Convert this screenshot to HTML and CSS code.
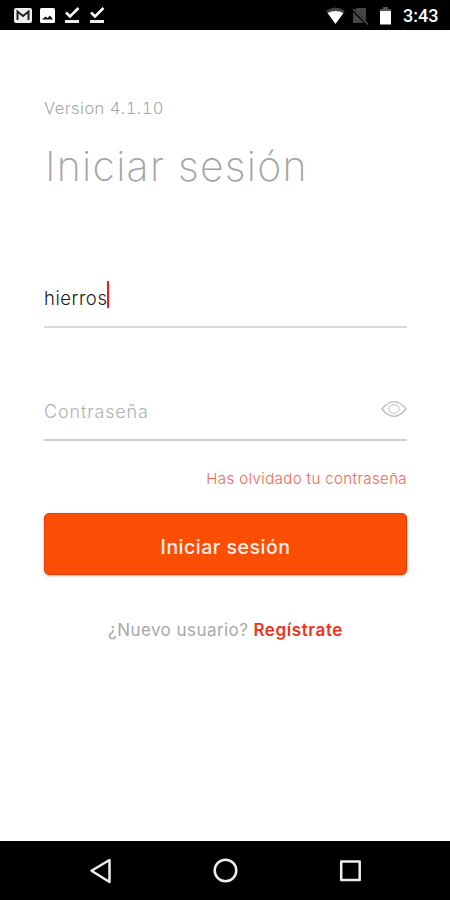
FILE: index.html
```html
<!DOCTYPE html>
<html lang="es">
<head>
<meta charset="utf-8">
<title>Iniciar sesión</title>
<link rel="stylesheet" href="styles.css">
</head>
<body>
<header class="status">
  <svg class="notifications" width="110" height="30" viewBox="0 0 110 30">
    <rect x="14" y="8" width="18" height="15" rx="2" fill="#eee"/>
    <path d="M17.5 20V11.5L23 16l5.5-4.5V20" fill="none" stroke="#222" stroke-width="2"/>
    <rect x="40" y="8" width="15" height="15" rx="1.5" fill="#fff"/>
    <path d="M42 19.5l3.5-3 2 1.5 2.500-2.500 3 4z" fill="#111"/>
    <path d="M66 12.500l4 4L78.500 8M91 12.500l4 4L103.500 8" fill="none" stroke="#fff" stroke-width="2.500"/>
    <path d="M65 20h14v3H65zM90 20h14v3H90z" fill="#eee"/>
  </svg>
  <div class="system">
    <svg width="70" height="30" viewBox="0 0 70 30">
      <path d="M0 11q9.500-7 19 0l-2.500 3H2.500z" fill="#444"/>
      <path d="M1.500 13q8-4 16 0L9.500 24z" fill="#fff"/>
      <path d="M27 11l4-3h9v15H27z" fill="#464646"/>
      <path d="M26 9l15 15" stroke="#000" stroke-width="3"/>
      <path d="M27 9l15 15.500" stroke="#555" stroke-width="1.300"/>
      <path d="M57 7h5v2h3v2H54V9h3z" fill="#555"/>
      <path d="M54 11h11v13.500H54z" fill="#fff"/>
    </svg>
    <span class="clock">3:43</span>
  </div>
</header>
<main class="login">
  <p class="version">Version 4.1.10</p>
  <h1 class="title">Iniciar sesión</h1>
  <div class="field user"><span class="value">hierros</span><i class="caret"></i></div>
  <div class="field password">
    <span class="placeholder">Contraseña</span>
    <svg width="26" height="18" viewBox="0 0 26 18" fill="none" stroke="#bcbcbc" stroke-width="1.300">
      <path d="M1 9C4.500 4.500 8 1.700 13 1.700S21.500 4.500 25 9c-3.500 4.500-7 7.300-12 7.300S4.500 13.500 1 9z"/>
      <ellipse cx="13" cy="9" rx="5" ry="4.300" stroke="#ccc"/>
    </svg>
  </div>
  <a class="forgot">Has olvidado tu contraseña</a>
  <button class="submit">Iniciar sesión</button>
  <p class="signup"><span class="question">¿Nuevo usuario?</span><a class="register">Regístrate</a></p>
</main>
<nav class="navbar">
  <svg width="450" height="59" viewBox="0 0 450 59" fill="none" stroke="#eee" stroke-width="2.500" stroke-linejoin="round">
    <path d="M109.500 19v22L91.500 29.700z"/>
    <circle cx="225.500" cy="29.500" r="10.800"/>
    <rect x="341.200" y="20.500" width="18.500" height="18.500"/>
  </svg>
</nav>
</body>
</html>
```
FILE: styles.css
```css
* { box-sizing: border-box; }
body {
  margin: 0;
  height: 900px;
  display: flex;
  flex-direction: column;
  background: #fff;
  font-family: Inter, "Open Sans", sans-serif;
  overflow: hidden;
  white-space: nowrap;
}
p, h1 { margin: 0; }
svg { display: block; flex: none; }
.status {
  height: 30px;
  display: flex;
  justify-content: space-between;
  background: #000;
}
.system { display: flex; width: 124px; }
.clock {
  margin-left: 7px;
  font: 500 18px/32px Roboto, sans-serif;
  color: #fff;
}
.login {
  flex: 1;
  display: flex;
  flex-direction: column;
  padding: 66px 43px 0 44px;
}
.version {
  font-size: 16.5px;
  line-height: 25px;
  color: #a8a8a8;
  font-weight: 300;
  letter-spacing: .45px;
  font-variant-numeric: tabular-nums;
}
.title {
  margin-top: 15px;
  padding-left: 1px;
  font-size: 41px;
  line-height: 60px;
  font-weight: 200;
  letter-spacing: 1.25px;
  color: #a4a4a4;
}
.field {
  display: flex;
  align-items: center;
}
.user {
  margin-top: 83px;
  height: 49px;
  padding-bottom: 16px;
  border-bottom: 2px solid #dadada;
}
.value {
  padding-top: 6px;
  font-size: 18.5px;
  line-height: 30px;
  color: #222;
  font-weight: 300;
  letter-spacing: .55px;
}
.caret {
  width: 2px;
  height: 27px;
  background: #f01818;
}
.password {
  margin-top: 67px;
  height: 46px;
  padding-bottom: 16px;
  justify-content: space-between;
  border-bottom: 2px solid #cecece;
}
.placeholder {
  padding-top: 5px;
  font-size: 18px;
  line-height: 30px;
  font-weight: 300;
  letter-spacing: .85px;
  color: #b0b0b0;
}
.forgot {
  margin-top: 27px;
  align-self: flex-end;
  font-size: 15px;
  line-height: 22px;
  font-weight: 300;
  letter-spacing: .4px;
  color: #f4664e;
}
.submit {
  margin-top: 23px;
  height: 62px;
  padding: 5px 0 0;
  border: 1px solid #f03a0a;
  border-radius: 5px;
  background: #fb4e05;
  box-shadow: 0 1px 3px #0004;
  color: #fff0e9;
  font: 500 19.5px/30px Inter, sans-serif;
  letter-spacing: .5px;
}
.signup {
  margin-top: 43px;
  display: flex;
  gap: 5px;
  padding-left: 64px;
  font-size: 17px;
  line-height: 24px;
}
.question { color: #a8a8a8; letter-spacing: .45px; }
.register { color: #ee321c; font-weight: 600; letter-spacing: .6px; }
.navbar {
  height: 59px;
  background: #000;
}
```
